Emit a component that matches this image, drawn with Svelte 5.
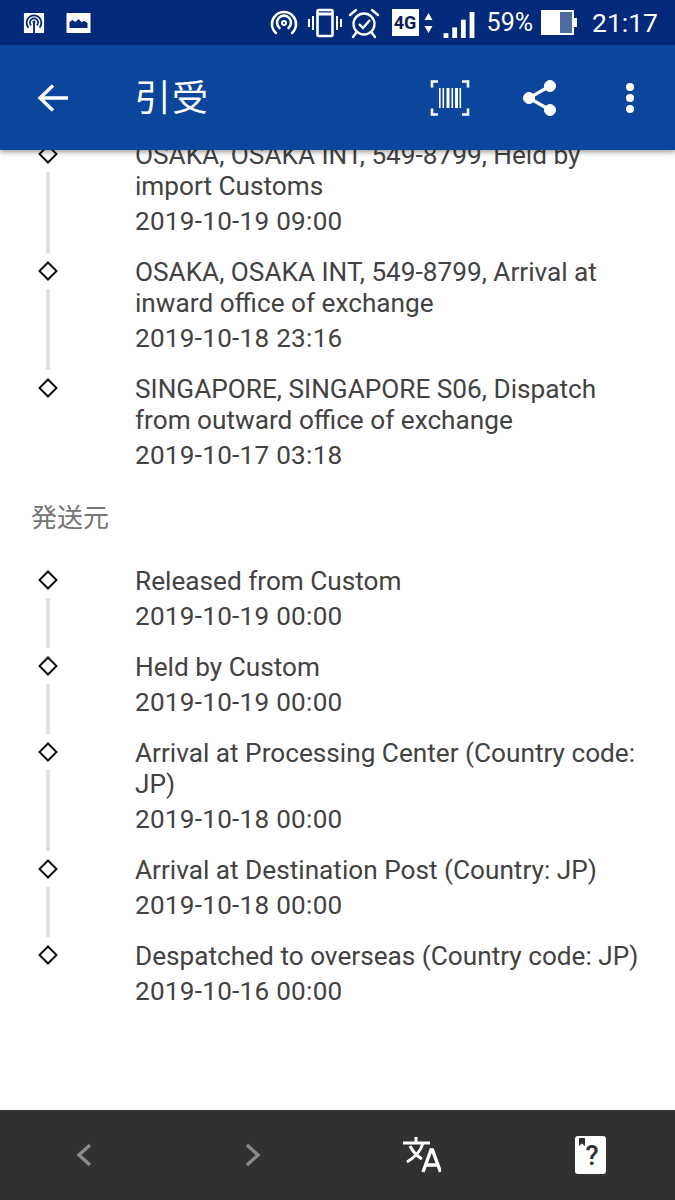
<script>
  const carrier = [
    { title: 'OSAKA, OSAKA INT, 549-8799, Held by import Customs', date: '2019-10-19 09:00' },
    { title: 'OSAKA, OSAKA INT, 549-8799, Arrival at inward office of exchange', date: '2019-10-18 23:16' },
    { title: 'SINGAPORE, SINGAPORE S06, Dispatch from outward office of exchange', date: '2019-10-17 03:18' }
  ];
  const origin = [
    { title: 'Released from Custom', date: '2019-10-19 00:00' },
    { title: 'Held by Custom', date: '2019-10-19 00:00' },
    { title: 'Arrival at Processing Center (Country code: JP)', date: '2019-10-18 00:00' },
    { title: 'Arrival at Destination Post (Country: JP)', date: '2019-10-18 00:00' },
    { title: 'Despatched to overseas (Country code: JP)', date: '2019-10-16 00:00' }
  ];
</script>

{#snippet timeline(items)}
  <ul class="timeline">
    {#each items as item, i}
      <li class="event">
        <div class="rail">
          <span class="diamond"></span>
          {#if i < items.length - 1}<span class="line"></span>{/if}
        </div>
        <div class="body">
          <div class="title">{item.title}</div>
          <div class="date">{item.date}</div>
        </div>
      </li>
    {/each}
  </ul>
{/snippet}

<div class="screen">
  <div class="status">
    <div class="status-left">
      <svg width="22" height="22" viewBox="0 0 24 24">
        <rect x="1" y="1" width="22" height="22" rx="1" fill="#fff" />
        <g fill="none" stroke="#02297a" stroke-width="2">
          <path d="M6 17a8 8 0 1 1 12 0" />
          <path d="M8.800 14.500a4.400 4.400 0 1 1 6.400 0" />
        </g>
        <circle cx="12" cy="11" r="1.700" fill="#02297a" />
        <rect x="11" y="12" width="2" height="11" fill="#02297a" />
      </svg>
      <svg width="25" height="20" viewBox="0 0 24 20">
        <rect width="24" height="20" fill="#fff" />
        <path d="M3 15V9l3-2 3 2 3-3 3 3 3-1 3 2v5z" fill="#02297a" />
      </svg>
    </div>
    <div class="status-right">
      <svg width="28" height="26" viewBox="0 0 28 26" fill="none" stroke="#fff" stroke-width="2.600">
        <path d="M6 23a12 12 0 1 1 16 0" stroke-linecap="round" />
        <path d="M9.500 18a7 7 0 1 1 9 0" stroke-linecap="round" />
        <circle cx="14" cy="13" r="2" stroke-width="2" />
      </svg>
      <svg class="vibrate" width="36" height="30" viewBox="0 0 36 30" fill="none" stroke="#fff" stroke-width="2">
        <rect x="10.500" y="2" width="15" height="26" rx="1" stroke-width="2.600" />
        <path d="M11 6h14" stroke-width="3" />
        <path d="M6 8v14M2 11v8M30 8v14M34 11v8" />
      </svg>
      <svg class="alarm" width="32" height="32" viewBox="0 0 32 32" fill="none" stroke="#fff" stroke-width="2.400">
        <circle cx="16" cy="17" r="10.500" />
        <path d="M11 17l4 4 7-8" />
        <path d="M2 8l6-5M30 8l-6-5M8 26l-3 4M24 26l3 4" stroke-linecap="round" />
      </svg>
      <div class="net">
        <span class="four-g">4G</span>
        <svg width="11" height="22" viewBox="0 0 10 22" fill="#fff">
          <path d="M5 1l4 7H1zM5 21l4-7H1z" />
        </svg>
      </div>
      <svg class="signal" width="32" height="27" viewBox="0 0 32 28" fill="#fff">
        <rect x="0" y="23" width="5" height="5" />
        <rect x="9" y="17" width="5" height="11" />
        <rect x="18" y="9" width="5" height="19" />
        <rect x="27" y="1" width="5" height="27" />
      </svg>
      <span class="pct">59%</span>
      <svg class="battery" width="36" height="25" viewBox="0 0 36 25">
        <rect x="0" y="0" width="33" height="25" fill="#fff" />
        <rect x="19" y="2" width="12" height="21" fill="#4c6c9f" />
        <rect x="33" y="8" width="3" height="9" fill="#fff" />
      </svg>
      <span class="clock">21:17</span>
    </div>
  </div>

  <header class="appbar">
    <svg class="back" width="34" height="34" viewBox="0 0 34 34" fill="none" stroke="#fff" stroke-width="3.400">
      <path d="M32 17H5M17 4.500L4 17l13 12.500" />
    </svg>
    <h1>引受</h1>
    <div class="actions">
      <span class="action">
        <svg width="40" height="36" viewBox="0 0 40 36" fill="#fff" stroke="none">
          <path d="M8 1.500H2v6M32 1.500h6v6M8 34.500H2v-6M32 34.500h6v-6" fill="none" stroke="#fff" stroke-width="2.600" />
          <rect x="9" y="8" width="1.600" height="20" />
          <rect x="12.500" y="8" width="1.600" height="20" />
          <rect x="16.500" y="8" width="3" height="20" />
          <rect x="21.500" y="8" width="1.600" height="20" />
          <rect x="25" y="8" width="3" height="20" />
          <rect x="29.500" y="8" width="1.600" height="20" />
        </svg>
      </span>
      <span class="action">
        <svg width="36" height="38" viewBox="0 0 36 38" fill="#fff" stroke="#fff">
          <path d="M28 7L7 19l21 12" fill="none" stroke-width="3.200" />
          <circle cx="28" cy="7" r="5.500" />
          <circle cx="7" cy="19" r="5.500" />
          <circle cx="28" cy="31" r="5.500" />
        </svg>
      </span>
      <span class="action">
        <svg width="10" height="32" viewBox="0 0 10 32" fill="#fff">
          <circle cx="5" cy="5" r="4" />
          <circle cx="5" cy="16" r="4" />
          <circle cx="5" cy="27" r="4" />
        </svg>
      </span>
    </div>
  </header>

  <main class="content">
    <div class="scrolled">
      {@render timeline(carrier)}
      <h2>発送元</h2>
      {@render timeline(origin)}
    </div>
  </main>

  <footer class="toolbar">
    <svg width="16" height="24" viewBox="0 0 16 24" fill="none" stroke="#8a8a8a" stroke-width="3.400">
      <path d="M14 2L3 12l11 10" />
    </svg>
    <svg width="16" height="24" viewBox="0 0 16 24" fill="none" stroke="#8a8a8a" stroke-width="3.400">
      <path d="M2 2l11 10L2 22" />
    </svg>
    <svg width="38" height="36" viewBox="0 0 38 36" fill="none" stroke="#fff" stroke-width="3">
      <path d="M0 6h27M13 0v6M20 6c-2 8-8 14-16 19M7 9c3 6 7 10 12 13" />
      <path d="M20 35l8-22h1.500l8 22M23 28h12" stroke-width="3.400" />
    </svg>
    <svg width="31" height="38" viewBox="0 0 31 38">
      <rect width="31" height="38" rx="3" fill="#fff" />
      <path d="M4 2h6v8l-3-2.500L4 10z" fill="#313131" />
      <text x="17" y="29" class="q">?</text>
    </svg>
  </footer>
</div>

<style>
  :global(body) {
    margin: 0;
    background: #fff;
  }

  .screen {
    width: 675px;
    height: 1200px;
    display: flex;
    flex-direction: column;
    overflow: hidden;
    font-family: Roboto, "Noto Sans CJK JP", sans-serif;
    color: #424242;
  }

  .status {
    height: 45px;
    flex: none;
    background: #02297a;
    display: flex;
    align-items: center;
    justify-content: space-between;
    padding: 0 17px 0 23px;
    color: #fff;
  }

  .status-left {
    display: flex;
    align-items: center;
    gap: 21px;
  }

  .status-right {
    display: flex;
    align-items: center;
  }

  .vibrate {
    margin-left: 9px;
  }

  .alarm {
    margin-left: 5px;
  }

  .net {
    display: flex;
    align-items: center;
    gap: 4px;
    margin-left: 12px;
  }

  .four-g {
    background: #fff;
    color: #0a1f55;
    font-size: 18px;
    font-weight: 700;
    width: 27px;
    height: 27px;
    line-height: 27px;
    text-align: center;
  }

  .signal {
    margin: 4px 0 0 9px;
  }

  .pct,
  .clock {
    font-size: 25px;
    line-height: 30px;
  }

  .pct {
    margin-left: 12px;
  }

  .battery {
    margin-left: 8px;
  }

  .clock {
    font-size: 26.500px;
    margin-left: 15px;
  }

  .appbar {
    height: 105px;
    flex: none;
    background: #0b469c;
    display: flex;
    align-items: center;
    padding-left: 36px;
    box-shadow: 0 2px 5px rgba(0, 0, 0, 0.4);
    position: relative;
    color: #fff;
  }

  .back {
    flex: none;
  }

  h1 {
    margin: 0 0 0 65px;
    padding-bottom: 5px;
    font-size: 36px;
    font-weight: 400;
    letter-spacing: 1px;
    flex: 1;
  }

  .actions {
    display: flex;
    align-items: center;
  }

  .action {
    width: 90px;
    display: flex;
    justify-content: center;
  }

  .content {
    flex: 1;
    overflow: hidden;
    background: #fff;
  }

  .scrolled {
    margin-top: -10px;
  }

  .timeline {
    list-style: none;
    margin: 0;
    padding: 0;
  }

  .event {
    display: grid;
    grid-template-columns: 135px 1fr;
    padding-right: 30px;
  }

  .rail {
    position: relative;
    display: flex;
    flex-direction: column;
    align-items: center;
    width: 96px;
  }

  .diamond {
    width: 10px;
    height: 10px;
    border: 2px solid #111;
    transform: rotate(45deg);
    margin-top: 7px;
    flex: none;
  }

  .line {
    width: 3.500px;
    background: #e0e0e0;
    flex: 1;
    margin-top: 11px;
    margin-bottom: 4.500px;
  }

  .body {
    padding-bottom: 20px;
  }

  .title {
    font-size: 26.200px;
    line-height: 31px;
  }

  .date {
    font-size: 26.100px;
    letter-spacing: 0.270px;
    line-height: 31px;
    margin-top: 4px;
  }

  h2 {
    margin: 10px 0 31px 31px;
    font-size: 26px;
    line-height: 34px;
    font-weight: 400;
    color: #757575;
  }

  .toolbar {
    height: 90px;
    flex: none;
    background: #313131;
    display: grid;
    grid-template-columns: 168px 170px 168px 169px;
    justify-items: center;
    align-items: center;
  }

  .q {
    font-family: Roboto, sans-serif;
    font-size: 27px;
    font-weight: 500;
    text-anchor: middle;
    fill: #313131;
  }
</style>
